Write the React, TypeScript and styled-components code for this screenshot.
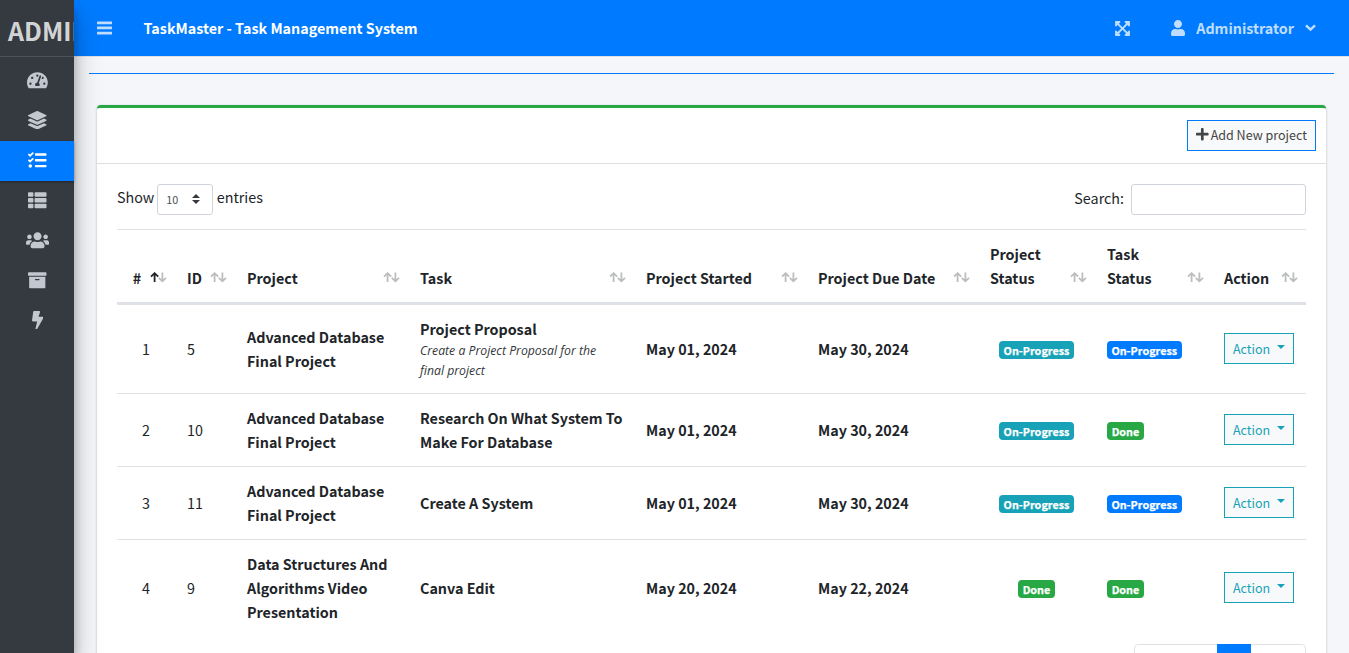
import React from 'react';
import styled, { createGlobalStyle } from 'styled-components';
import {
  FaTachometerAlt, FaLayerGroup, FaTasks, FaThList, FaUsers, FaArchive, FaBolt,
  FaExpandArrowsAlt, FaUser, FaPlus,
} from 'react-icons/fa';

const Global = createGlobalStyle`
  *, *::before, *::after { box-sizing: border-box; }
  html, body { margin: 0; height: 653px; overflow: hidden; }
  body {
    font-family: 'Noto Sans CJK SC', 'Noto Sans', sans-serif;
    font-size: 14.32px; line-height: 24px; color: #212529; background: #f4f6f9;
  }
`;

const Page = styled.div`
  display: flex; width: 1349px; height: 653px; overflow: hidden;
`;
const Sidebar = styled.aside`
  position: relative; z-index: 2; flex: 0 0 74px; width: 74px; min-width: 0; background: #343a40;
  box-shadow: 0 14px 28px rgba(0,0,0,.25), 0 10px 10px rgba(0,0,0,.22);
`;
const Brand = styled.div`
  height: 57px; padding: 14px 0 0 8px; overflow: hidden; white-space: nowrap;
  border-bottom: 1px solid #4b545c; font-size: 25px; line-height: 32px;
  font-weight: 700; color: rgba(255,255,255,.8);
`;
const NavItem = styled.a<{ $active?: boolean }>`
  display: flex; align-items: center; justify-content: center; height: 40px;
  padding: 0 0 2px 1px;
  color: ${p => (p.$active ? '#fff' : '#c2c7d0')};
  background: ${p => (p.$active ? '#007bff' : 'transparent')};
  box-shadow: ${p => (p.$active ? '0 1px 3px rgba(0,0,0,.12), 0 1px 2px rgba(0,0,0,.24)' : 'none')};
`;
const NavList = styled.nav`
  padding-top: 4px;
`;
const Glyph = styled.span<{ $w: number; $h: number }>`
  display: block; flex: none; width: ${p => p.$w}px; height: ${p => p.$h}px;
  svg { display: block; width: 100%; height: 100%; }
`;
const Main = styled.div`
  flex: 1; min-width: 0; display: flex; flex-direction: column;
`;
const Topbar = styled.header`
  display: flex; align-items: center; flex: 0 0 57px; padding: 0 33px 0 23px;
  background: #007bff; border-bottom: 1px solid #dee2e6; color: rgba(255,255,255,.75);
  font-weight: 700;
`;
const Title = styled.span`
  margin-left: 31.5px; flex: 1; color: #fff;
`;
const UserMenu = styled.div`
  display: flex; align-items: center; margin-left: 41px;
`;
const UserName = styled.span`
  margin: 0 11px 0 11px;
`;
const Content = styled.main`
  padding: 16px 15px 0;
`;
const Rule = styled.hr`
  margin: 0 0 31px; border: 0; height: 1px; background: #007bff;
`;
const Card = styled.section`
  margin: 0 8px; height: 700px; background: #fff; border-top: 3px solid #28a745; border-radius: 4px;
  box-shadow: 0 0 1px rgba(0,0,0,.125), 0 1px 3px rgba(0,0,0,.2);
`;
const CardHeader = styled.div`
  display: flex; justify-content: flex-end; height: 56px; padding: 12px 10px;
  border-bottom: 1px solid #dfdfdf;
`;
const AddButton = styled.button`
  display: flex; align-items: center; justify-content: center; gap: 2px;
  width: 129px; height: 31px; padding: 0 0 2px; border: 1px solid #007bff; background: #f8f9fa;
  color: #444; font-family: inherit; font-size: 12.53px; line-height: 21px;
`;
const CardBody = styled.div`
  padding: 20px;
`;
const Controls = styled.div`
  display: flex; justify-content: space-between; height: 45px;
`;
const Control = styled.label`
  display: flex; align-items: flex-start; height: 31px;
`;
const ControlText = styled.span<{ $top?: number }>`
  padding-top: ${p => p.$top ?? 1}px;
`;
const LengthSelect = styled.span`
  display: flex; align-items: center; justify-content: space-between;
  width: 56px; height: 31px; margin: 0 3.4px 0 3px; padding: 0 12px 1px 8px;
  border: 1px solid #ced4da; border-radius: 3px; font-size: 10.8px; color: #495057;
`;
const SearchInput = styled.input`
  width: 175px; height: 31px; margin-left: 7px; border: 1px solid #ced4da; border-radius: 3px;
`;
const Table = styled.table`
  width: 1189px; table-layout: fixed; border-collapse: separate; border-spacing: 0;
`;
const Th = styled.th<{ $center?: boolean }>`
  position: relative; height: 76px; padding: 12px 30px 12px 12px; vertical-align: bottom;
  text-align: ${p => (p.$center ? 'center' : 'left')};
  border-top: 1px solid #dee2e6; border-bottom: 3px solid #dee2e6;
`;
const SortIcon = styled.svg`
  position: absolute; right: 8.5px; bottom: 19px; display: block;
`;
const Td = styled.td<{ $center?: boolean; $bold?: boolean; $first?: boolean }>`
  padding: ${p => (p.$bold ? '12px 8px 12px 12px' : '12px')}; vertical-align: middle;
  text-align: ${p => (p.$center ? 'center' : 'left')};
  font-weight: ${p => (p.$bold ? 700 : 400)};
  border-top: ${p => (p.$first ? '0' : '1px solid #dee2e6')};
`;
const Note = styled.div`
  max-width: 190px; font: italic 400 12.25px/20px 'Open Sans', sans-serif; color: #34383c;
`;
const Badge = styled.span<{ $color: string }>`
  display: block; width: max-content; min-width: 37px; height: 18px; padding: 0 4.4px; border-radius: 4px;
  margin: 1px 0 0; background: ${p => p.$color}; color: #fff; text-align: center;
  font-size: 10.8px; line-height: 18px; font-weight: 700;
  -webkit-text-stroke: .25px #fff;
`;
const BadgeCenter = styled.div`
  display: flex; justify-content: center;
`;
const ActionButton = styled.button`
  display: flex; align-items: center; gap: 7px; width: 70px; height: 31px; padding: 0 8px;
  margin-top: -2px; border: 1px solid #17a2b8; background: #f8f9fa; color: #17a2b8;
  font-family: inherit; font-size: 12.53px; line-height: 21px;
`;
const Caret = styled.i`
  margin-top: -3px; border: 4px solid transparent; border-top-color: currentColor; border-bottom: 0;
`;
const Pagination = styled.div`
  display: flex; width: 172px; height: 38px; margin: 8px 0 0 auto;
  border: 1px solid #dee2e6; border-radius: 4px;
`;
const ActivePage = styled.span`
  width: 34px; height: 38px; margin: -1px 0 0 82px; background: #007bff;
`;

const TEAL = '#17a2b8';
const BLUE = '#007bff';
const GREEN = '#28a745';

const navItems = [
  { Icon: FaTachometerAlt, w: 20.8 },
  { Icon: FaLayerGroup, w: 18.5 },
  { Icon: FaTasks, w: 18.5 },
  { Icon: FaThList, w: 18.5 },
  { Icon: FaUsers, w: 23.1 },
  { Icon: FaArchive, w: 18.5 },
  { Icon: FaBolt, w: 11.6 },
];
const widths = [58, 60, 173, 226, 172, 172, 117, 117, 94];
const headers = ['#', 'ID', 'Project', 'Task', 'Project Started', 'Project Due Date', 'Project Status', 'Task Status', 'Action'];

type Status = { label: string; color: string };
const progress: Status = { label: 'On-Progress', color: TEAL };
const working: Status = { label: 'On-Progress', color: BLUE };
const done: Status = { label: 'Done', color: GREEN };

const rows = [
  { id: 5, project: 'Advanced Database Final Project', task: 'Project Proposal', note: 'Create a Project Proposal for the final project', start: 'May 01, 2024', due: 'May 30, 2024', ps: progress, ts: working },
  { id: 10, project: 'Advanced Database Final Project', task: 'Research On What System To Make For Database', start: 'May 01, 2024', due: 'May 30, 2024', ps: progress, ts: done },
  { id: 11, project: 'Advanced Database Final Project', task: 'Create A System', start: 'May 01, 2024', due: 'May 30, 2024', ps: progress, ts: working },
  { id: 9, project: 'Data Structures And Algorithms Video Presentation', task: 'Canva Edit', start: 'May 20, 2024', due: 'May 22, 2024', ps: done, ts: done },
];

function Sort({ active }: { active?: boolean }) {
  return (
    <SortIcon width="17" height="11" viewBox="0 0 17 11" fill="none" strokeWidth="1.8">
      <path d="M8.8 5.8 12.4 9.3 16 5.8M12.4 9V.5" stroke="#bcbdbe" />
      <path d="M1 4.7 4.6 1.2 8.2 4.7M4.6 1.4V10" stroke={active ? '#212529' : '#bcbdbe'} />
    </SortIcon>
  );
}

export default function App() {
  return (
    <Page>
      <Global />
      <Sidebar>
        <Brand>ADMIN</Brand>
        <NavList>
          {navItems.map(({ Icon, w }, i) => (
            <NavItem key={i} $active={i === 2}><Glyph $w={w} $h={18.5}><Icon /></Glyph></NavItem>
          ))}
        </NavList>
      </Sidebar>
      <Main>
        <Topbar>
          <Glyph $w={15} $h={14}>
            <svg viewBox="0 0 15 14" fill="currentColor">
              <rect y="0.4" width="15" height="2.8" rx="0.5" />
              <rect y="5.5" width="15" height="2.8" rx="0.5" />
              <rect y="10.7" width="15" height="2.8" rx="0.5" />
            </svg>
          </Glyph>
          <Title>TaskMaster - Task Management System</Title>
          <Glyph $w={15} $h={17}><FaExpandArrowsAlt /></Glyph>
          <UserMenu>
            <Glyph $w={14} $h={16}><FaUser /></Glyph>
            <UserName>Administrator</UserName>
            <Glyph $w={11} $h={8}>
              <svg viewBox="0 0 11 8" fill="none" stroke="currentColor" strokeWidth="2.5">
                <path d="M1 1.3 5.5 5.6 10 1.3" />
              </svg>
            </Glyph>
          </UserMenu>
        </Topbar>
        <Content>
          <Rule />
          <Card>
            <CardHeader>
              <AddButton><Glyph $w={12.6} $h={14.4}><FaPlus /></Glyph>Add New project</AddButton>
            </CardHeader>
            <CardBody>
              <Controls>
                <Control>
                  <ControlText>Show</ControlText>
                  <LengthSelect>
                    10
                    <svg width="8" height="10" viewBox="0 0 8 10" fill="#343a40"><path d="M0 4 4 0 8 4ZM0 6 4 10 8 6Z" /></svg>
                  </LengthSelect>
                  <ControlText>entries</ControlText>
                </Control>
                <Control>
                  <ControlText $top={2}>Search:</ControlText>
                  <SearchInput />
                </Control>
              </Controls>
              <Table>
                <colgroup>{widths.map((w, i) => <col key={i} width={w} />)}</colgroup>
                <thead>
                  <tr>
                    {headers.map((h, i) => (
                      <Th key={h} $center={i === 0}>{h}<Sort active={i === 0} /></Th>
                    ))}
                  </tr>
                </thead>
                <tbody>
                  {rows.map((r, i) => (
                    <tr key={r.id}>
                      <Td $first={!i} $center>{i + 1}</Td>
                      <Td $first={!i}>{r.id}</Td>
                      <Td $first={!i} $bold>{r.project}</Td>
                      <Td $first={!i} $bold>{r.task}{r.note && <Note>{r.note}</Note>}</Td>
                      <Td $first={!i} $bold>{r.start}</Td>
                      <Td $first={!i} $bold>{r.due}</Td>
                      <Td $first={!i}><BadgeCenter><Badge $color={r.ps.color}>{r.ps.label}</Badge></BadgeCenter></Td>
                      <Td $first={!i}><Badge $color={r.ts.color}>{r.ts.label}</Badge></Td>
                      <Td $first={!i}><ActionButton>Action<Caret /></ActionButton></Td>
                    </tr>
                  ))}
                </tbody>
              </Table>
              <Pagination><ActivePage /></Pagination>
            </CardBody>
          </Card>
        </Content>
      </Main>
    </Page>
  );
}
